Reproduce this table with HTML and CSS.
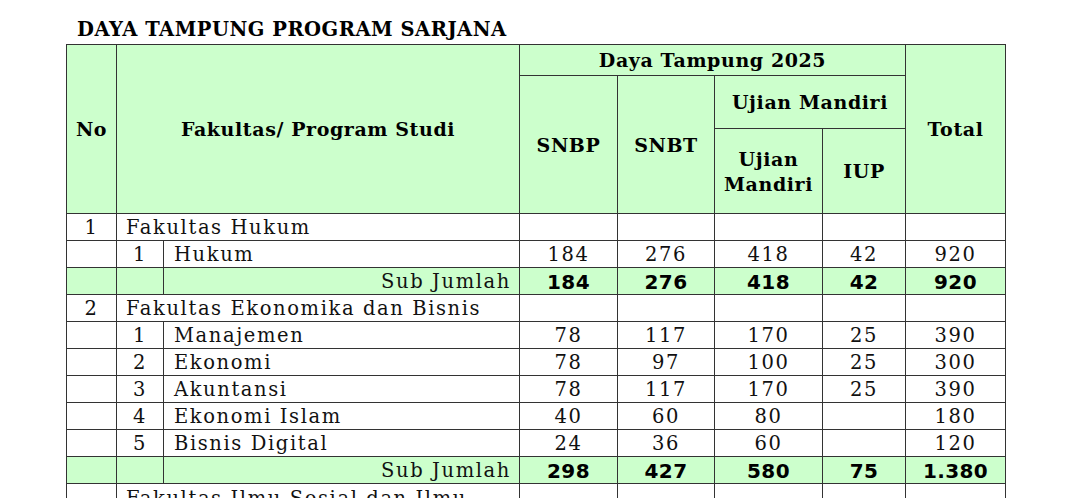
FILE: index.html
```html
<!DOCTYPE html>
<html lang="id">
<head>
<meta charset="utf-8">
<title>Daya Tampung Program Sarjana</title>
<link rel="stylesheet" href="styles.css">
</head>
<body>
<div class="page">
  <h1 class="title">DAYA TAMPUNG PROGRAM SARJANA</h1>
  <table class="dt">
    <colgroup>
      <col class="c-no"><col class="c-sub"><col class="c-name">
      <col class="c-snbp"><col class="c-snbt"><col class="c-um"><col class="c-iup"><col class="c-tot">
    </colgroup>
    <thead>
      <tr class="h1">
        <th rowspan="3">No</th>
        <th rowspan="3" colspan="2">Fakultas/ Program Studi</th>
        <th colspan="4">Daya Tampung 2025</th>
        <th rowspan="3">Total</th>
      </tr>
      <tr class="h2">
        <th rowspan="2">SNBP</th>
        <th rowspan="2">SNBT</th>
        <th colspan="2">Ujian Mandiri</th>
      </tr>
      <tr class="h3">
        <th class="two">Ujian<br>Mandiri</th>
        <th>IUP</th>
      </tr>
    </thead>
    <tbody>
      <tr class="fac"><td class="no">1</td><td colspan="2" class="fname">Fakultas Hukum</td><td></td><td></td><td></td><td></td><td></td></tr>
      <tr><td></td><td class="no">1</td><td class="pname">Hukum</td><td class="n">184</td><td class="n">276</td><td class="n">418</td><td class="n">42</td><td class="n">920</td></tr>
      <tr class="sum"><td></td><td></td><td class="slabel">Sub Jumlah</td><td class="b">184</td><td class="b">276</td><td class="b">418</td><td class="b">42</td><td class="b">920</td></tr>
      <tr class="fac"><td class="no">2</td><td colspan="2" class="fname">Fakultas Ekonomika dan Bisnis</td><td></td><td></td><td></td><td></td><td></td></tr>
      <tr><td></td><td class="no">1</td><td class="pname">Manajemen</td><td class="n">78</td><td class="n">117</td><td class="n">170</td><td class="n">25</td><td class="n">390</td></tr>
      <tr><td></td><td class="no">2</td><td class="pname">Ekonomi</td><td class="n">78</td><td class="n">97</td><td class="n">100</td><td class="n">25</td><td class="n">300</td></tr>
      <tr><td></td><td class="no">3</td><td class="pname">Akuntansi</td><td class="n">78</td><td class="n">117</td><td class="n">170</td><td class="n">25</td><td class="n">390</td></tr>
      <tr><td></td><td class="no">4</td><td class="pname">Ekonomi Islam</td><td class="n">40</td><td class="n">60</td><td class="n">80</td><td class="n"></td><td class="n">180</td></tr>
      <tr><td></td><td class="no">5</td><td class="pname">Bisnis Digital</td><td class="n">24</td><td class="n">36</td><td class="n">60</td><td class="n"></td><td class="n">120</td></tr>
      <tr class="sum"><td></td><td></td><td class="slabel">Sub Jumlah</td><td class="b">298</td><td class="b">427</td><td class="b">580</td><td class="b">75</td><td class="b">1.380</td></tr>
      <tr class="fac tall"><td class="no">3</td><td colspan="2" class="fname">Fakultas Ilmu Sosial dan Ilmu<br>Politik</td><td></td><td></td><td></td><td></td><td></td></tr>
    </tbody>
  </table>
</div>
</body>
</html>
```

FILE: styles.css
```css
html, body {
  margin: 0;
  padding: 0;
  background: #ffffff;
}

.page {
  padding: 18px 0 0 66px;
  font-family: "DejaVu Serif", "Liberation Serif", serif;
  color: #111;
}

.title {
  margin: 0 0 2px 11px;
  font-size: 19.5px;
  font-weight: bold;
  line-height: 24px;
  letter-spacing: 0.5px;
  color: #000;
}

.dt {
  border-collapse: collapse;
  table-layout: fixed;
  width: 939px;
  font-size: 19.5px;
  letter-spacing: 1.6px;
}

.c-no { width: 50px; }
.c-sub { width: 47px; }
.c-name { width: 356px; }
.c-snbp { width: 98px; }
.c-snbt { width: 97px; }
.c-um { width: 108px; }
.c-iup { width: 83px; }
.c-tot { width: 100px; }

.dt th,
.dt td {
  border: 1px solid #333;
  padding: 0;
}

.dt th {
  background: #ccffcc;
  font-weight: bold;
  font-size: 19px;
  letter-spacing: 0.6px;
  text-align: center;
  vertical-align: middle;
  color: #000;
}

.h1 { height: 31px; }
.h2 { height: 53px; }
.h3 { height: 85px; }

.dt th.two { line-height: 25px; padding-top: 2px; }

.dt td {
  height: 24px;
  padding-top: 2px;
  line-height: 24px;
  vertical-align: middle;
  white-space: nowrap;
}

.dt td.no { text-align: center; }
.dt td.fname { padding-left: 9px; }
.dt td.pname { padding-left: 10px; }
.dt td.n { text-align: center; }

.dt .sum td { background: #ccffcc; }
.dt td.slabel { text-align: right; padding-right: 8px; }
.dt td.b {
  text-align: center;
  font-family: "DejaVu Sans", "Liberation Sans", sans-serif;
  font-weight: bold;
  font-size: 20px;
  letter-spacing: 0.4px;
  color: #000;
}

.dt .tall td { height: 50px; vertical-align: middle; }
.dt .tall td.fname { white-space: normal; }
```
